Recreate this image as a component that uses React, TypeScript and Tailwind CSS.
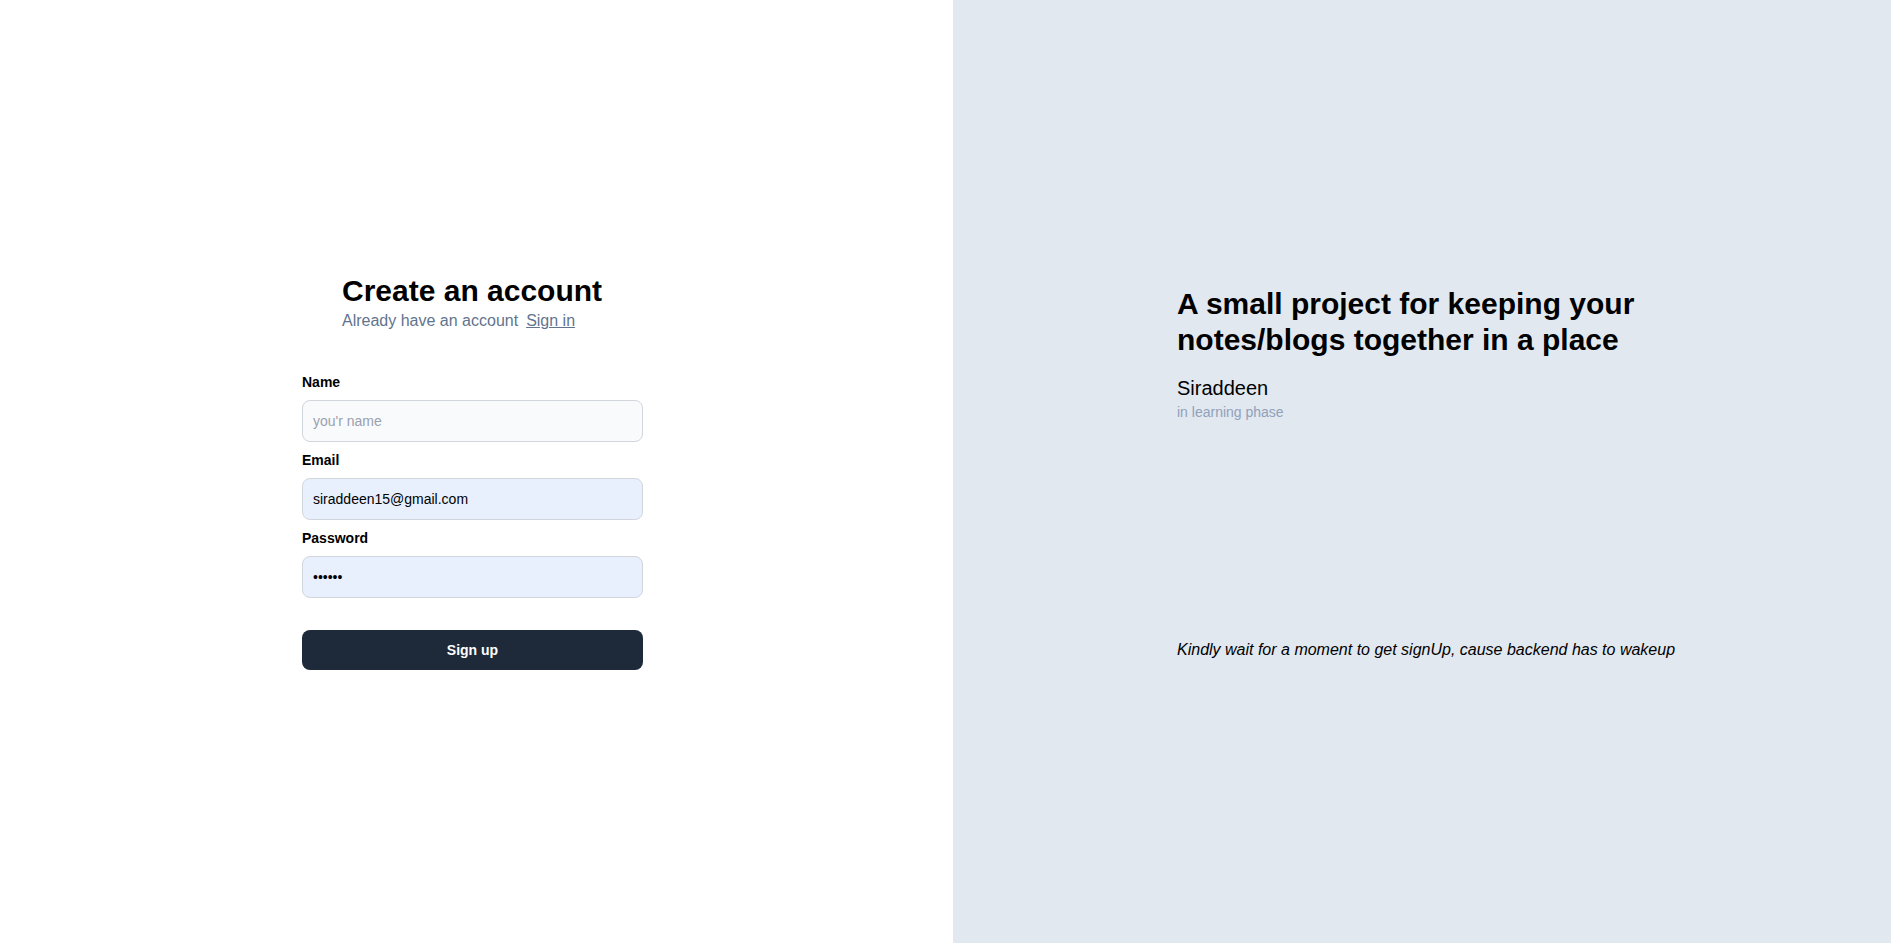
import React from "react";

const Field = ({
  label,
  type,
  placeholder,
  value,
  filled,
  first,
}: {
  label: string;
  type: string;
  placeholder?: string;
  value?: string;
  filled?: boolean;
  first?: boolean;
}) => (
  <div>
    <label className={`block mb-2 text-sm font-bold text-black ${first ? "" : "mt-2"}`}>{label}</label>
    <input
      type={type}
      placeholder={placeholder}
      defaultValue={value}
      readOnly
      className={`block w-full p-2.5 text-sm rounded-lg border border-gray-300 outline-none placeholder:text-gray-400 ${
        filled ? "bg-[#e8f0fe] text-black" : "bg-gray-50 text-gray-900"
      }`}
    />
  </div>
);

const Auth = () => (
  <div className="w-[953px] h-screen bg-white flex flex-col justify-center items-center pr-2">
    <div className="w-[341px]">
      <div className="px-10">
        <h1 className="text-3xl font-extrabold text-black">Create an account</h1>
        <div className="text-base text-slate-500">
          Already have an account
          <a className="pl-2 underline text-slate-500" href="#">
            Sign in
          </a>
        </div>
      </div>
      <div className="mt-[39px]">
        <Field label="Name" type="text" placeholder="you'r name" first />
        <Field label="Email" type="text" value="siraddeen15@gmail.com" filled />
        <Field label="Password" type="password" value="123456" filled />
        <button className="mt-8 w-full py-2.5 text-sm font-semibold text-white bg-gray-800 rounded-lg">
          Sign up
        </button>
      </div>
    </div>
  </div>
);

const Quote = () => (
  <div className="flex-1 h-screen bg-slate-200 flex flex-col justify-center items-center pt-[4px]">
    <div className="w-[490px]">
      <div className="text-3xl font-bold text-black">
        A small project for keeping your notes/blogs together in a place
      </div>
      <div className="mt-4 text-xl font-medium text-black">Siraddeen</div>
      <div className="text-sm text-slate-400">in learning phase</div>
      <div className="mt-[216px] text-base italic text-black whitespace-nowrap">
        Kindly wait for a moment to get signUp, cause backend has to wakeup
      </div>
    </div>
  </div>
);

export default function App() {
  return (
    <div className="flex w-full h-screen overflow-hidden font-['Liberation_Sans',Arial,sans-serif]">
      <Auth />
      <Quote />
    </div>
  );
}
